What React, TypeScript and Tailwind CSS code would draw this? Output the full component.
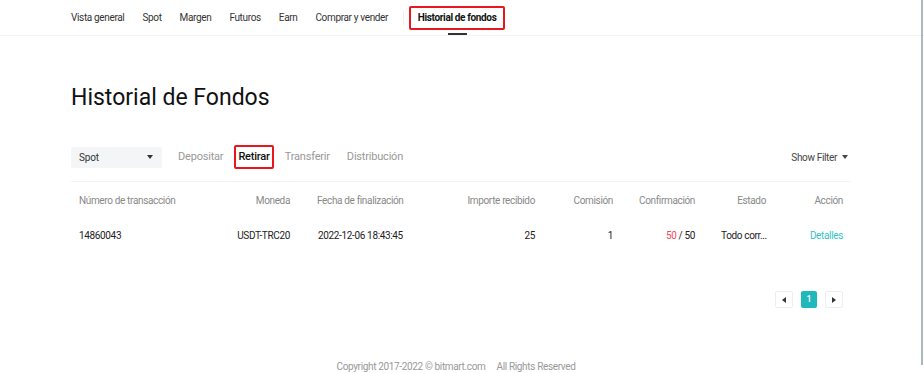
import React from "react";

const navItems = ["Vista general", "Spot", "Margen", "Futuros", "Earn", "Comprar y vender"];

const cols = "grid grid-cols-[101px_110px_150px_95px_78px_82px_71px_77px]";

function Caret() {
  return (
    <svg width="6" height="4" viewBox="0 0 6 4" className="fill-current">
      <path d="M0 0h6L3 4z" />
    </svg>
  );
}

export default function App() {
  return (
    <div
      className="relative h-[373px] w-[924px] overflow-hidden whitespace-nowrap bg-white tracking-[-0.35px] text-[#333]"
      style={{ fontFamily: "Roboto, 'Liberation Sans', sans-serif" }}
    >
      {/* top nav */}
      <div className="flex h-[36px] items-center border-b border-[#f4f4f4] pl-[71px] text-[10px] text-[#333]">
        <div className="flex items-center gap-[18px]">
          {navItems.map((n) => (
            <span key={n}>{n}</span>
          ))}
        </div>
        <span className="ml-[15px] h-[14px] w-px bg-[#eee]" />
        <div className="relative ml-[5px] flex h-[24px] w-[96px] items-center justify-center rounded-[2px] border-2 border-[#e8171d] font-bold text-[#111]">
          Historial de fondos
          <span className="absolute left-[37px] top-[25px] h-[2px] w-[19px] bg-[#333]" />
        </div>
      </div>

      {/* title */}
      <div className="pl-[71px] pt-[47px] text-[23px] leading-[30px] tracking-normal text-[#111]">Historial de Fondos</div>

      {/* tabs */}
      <div className="mt-[32px] flex w-[851px] items-center pl-[71px] text-[11px] tracking-[-0.2px]">
        <div className="flex h-[21px] w-[91px] items-center justify-between rounded-[2px] bg-[#f3f5f7] pl-[8px] pr-[9px] text-[10px] text-[#333]">
          <span>Spot</span>
          <Caret />
        </div>
        <span className="ml-[16px] text-[#999]">Depositar</span>
        <span className="ml-[11px] flex h-[24px] items-center rounded-[2px] border-2 border-[#e8171d] px-[2px] font-medium text-[#111]">
          Retirar
        </span>
        <span className="ml-[11px] text-[#999]">Transferir</span>
        <span className="ml-[17px] text-[#999]">Distribución</span>
        <span className="ml-auto mr-[3px] flex items-center gap-[5px] text-[10px] tracking-[-0.35px] text-[#444]">
          Show Filter
          <Caret />
        </span>
      </div>

      {/* table */}
      <div className="ml-[71px] mt-[12px] w-[780px] border-t border-[#f2f2f2] px-[8px] text-[10px]">
        <div className={`${cols} h-[36px] items-center text-[#888]`}>
          <span>Número de transacción</span>
          <span className="text-right">Moneda</span>
          <span className="pl-[27px]">Fecha de finalización</span>
          <span className="text-right">Importe recibido</span>
          <span className="text-right">Comisión</span>
          <span className="text-right">Confirmación</span>
          <span className="text-right">Estado</span>
          <span className="text-right">Acción</span>
        </div>
        <div className={`${cols} h-[34px] items-center text-[#222]`}>
          <span>14860043</span>
          <span className="text-right">USDT-TRC20</span>
          <span className="pl-[28px]">2022-12-06 18:43:45</span>
          <span className="text-right">25</span>
          <span className="text-right">1</span>
          <span className="text-right">
            <span className="text-[#f6465d]">50</span> / 50
          </span>
          <span className="pl-[26px]">Todo corr...</span>
          <span className="text-right text-[#35c2c6]">Detalles</span>
        </div>
      </div>

      {/* pagination */}
      <div className="mt-[39px] flex w-[843px] justify-end gap-[8px] text-[9px]">
        <span className="flex h-[17px] w-[18px] items-center justify-center rounded-[2px] border border-[#eee] text-[#333]">
          <svg width="4" height="6" viewBox="0 0 4 6" className="fill-current">
            <path d="M4 0v6L0 3z" />
          </svg>
        </span>
        <span className="flex h-[17px] w-[16px] items-center justify-center rounded-[2px] bg-[#21b8bc] font-medium text-white">
          1
        </span>
        <span className="flex h-[17px] w-[18px] items-center justify-center rounded-[2px] border border-[#eee] text-[#333]">
          <svg width="4" height="6" viewBox="0 0 4 6" className="fill-current">
            <path d="M0 0v6l4-3z" />
          </svg>
        </span>
      </div>

      {/* footer */}
      <div className="mt-[53px] flex justify-center pr-[12px] text-[10px] leading-[12px] text-[#999]">
        <span>Copyright 2017-2022 © bitmart.com</span>
        <span className="ml-[11px]">All Rights Reserved</span>
      </div>

      {/* right edge */}
      <div className="absolute right-[1px] top-0 h-[365px] w-[2px] bg-[#a9b9bf]" />
    </div>
  );
}
